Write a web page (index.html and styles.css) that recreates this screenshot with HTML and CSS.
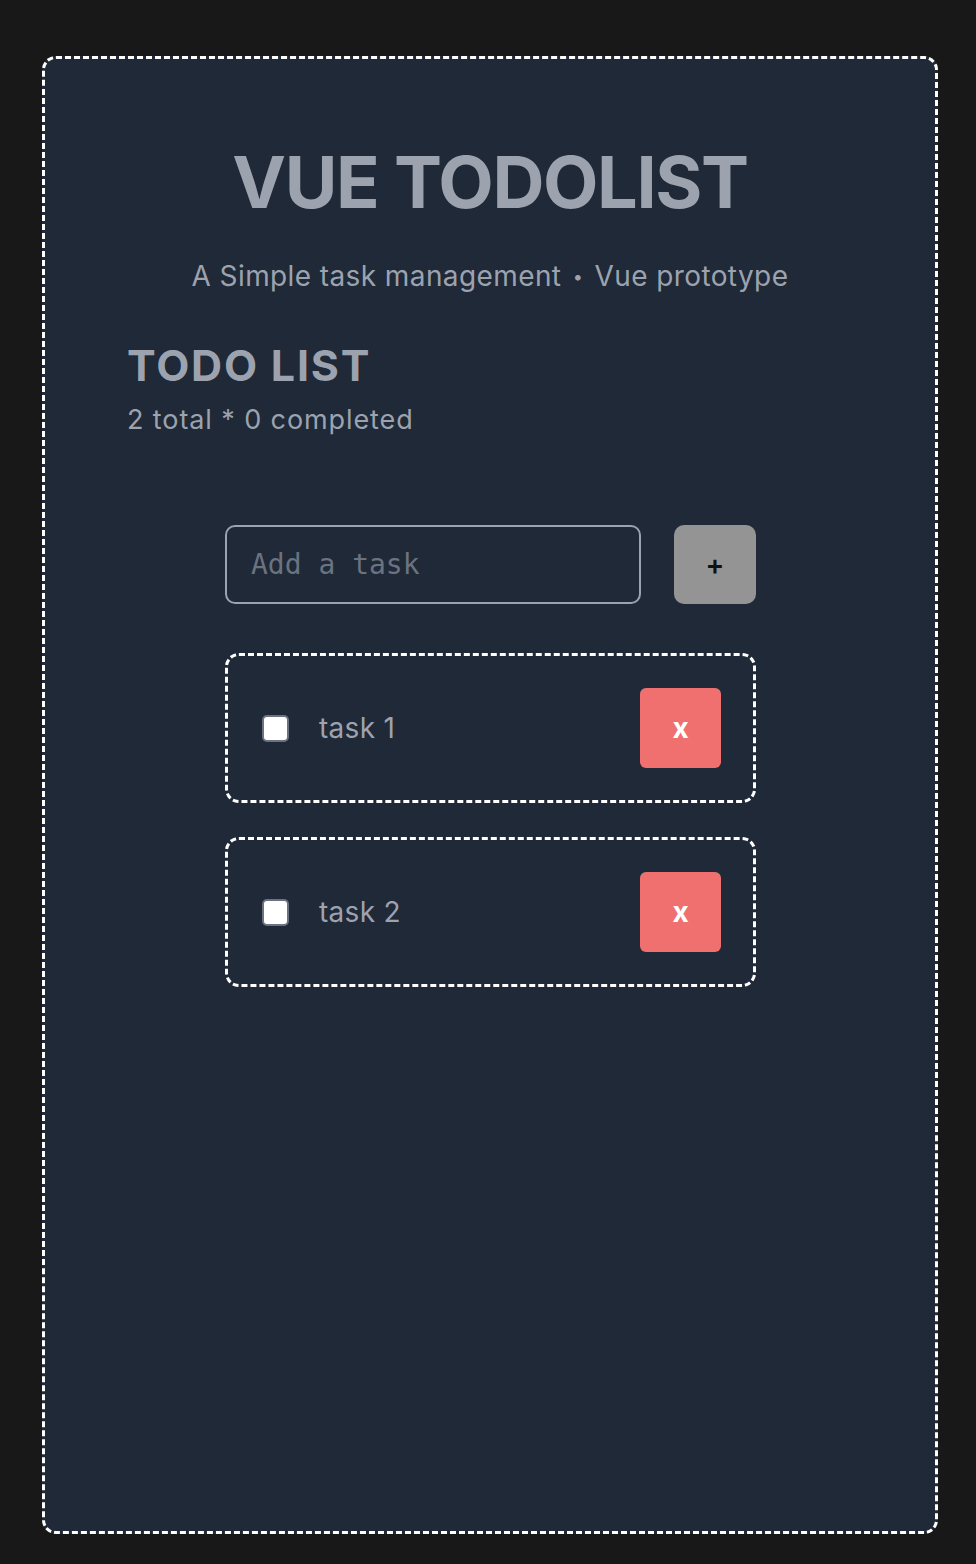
FILE: index.html
```html
<!DOCTYPE html>
<html lang="en">
<head>
<meta charset="utf-8">
<title>Vue Todolist</title>
<link rel="stylesheet" href="styles.css">
</head>
<body>
<main class="card">
  <header class="hero">
    <h1 class="title">VUE TODOLIST</h1>
    <p class="subtitle">A Simple task management <span class="dot">•</span> Vue prototype</p>
  </header>
  <section class="list-head">
    <h2 class="list-title">TODO LIST</h2>
    <p class="stats">2 total * 0 completed</p>
  </section>
  <section class="todo">
    <form class="add-form">
      <input class="add-input" type="text" placeholder="Add a task">
      <button class="add-btn" type="button">+</button>
    </form>
    <ul class="tasks">
      <li class="task">
        <input class="task-check" type="checkbox">
        <span class="task-text">task 1</span>
        <button class="del-btn" type="button">x</button>
      </li>
      <li class="task">
        <input class="task-check" type="checkbox">
        <span class="task-text">task 2</span>
        <button class="del-btn" type="button">x</button>
      </li>
    </ul>
  </section>
</main>
</body>
</html>
```

FILE: styles.css
```css
* { box-sizing: border-box; }

html, body {
  margin: 0;
  padding: 0;
  background: #181818;
}

body {
  padding: 56px 38px 30px 42px;
  font-family: Inter, "Noto Sans", sans-serif;
  color: #9ca3af;
}

.card {
  height: 1478px;
  width: 896px;
  border: 3px dashed #ffffff;
  border-radius: 14px;
  background: #1f2937;
  padding: 79px 0 0 82px;
}

.hero {
  text-align: center;
  padding-right: 82px;
}

.title {
  margin: 0;
  font-size: 72px;
  font-weight: 700;
  line-height: 87px;
  letter-spacing: -1.4px;
  color: #9ca3af;
}

.subtitle {
  margin: 34px 0 0;
  font-size: 28px;
  line-height: 34px;
  height: 34px;
  font-weight: 400;
  letter-spacing: 0.4px;
  color: #9ca3af;
}

.dot {
  font-size: 18px;
  line-height: 1;
  vertical-align: 3px;
  padding: 0 3px;
}

.list-head {
  margin-top: 47px;
}

.list-title {
  margin: 0;
  font-size: 43px;
  line-height: 51px;
  font-weight: 700;
  letter-spacing: 1.8px;
  color: #9ca3af;
}

.stats {
  margin: 14px 0 0;
  font-size: 27px;
  line-height: 30px;
  letter-spacing: 0.9px;
  color: #9ca3af;
}

.todo {
  width: 531px;
  margin: 90px 0 0 98px;
}

.add-form {
  display: flex;
  gap: 33px;
  margin: 0;
}

.add-input {
  flex: 1;
  height: 79px;
  border: 2px solid #9ca3af;
  border-radius: 10px;
  background: transparent;
  padding: 0 24px;
  font-family: "DejaVu Sans Mono", monospace;
  font-size: 28px;
  color: #d1d5db;
  outline: none;
}

.add-input::placeholder {
  color: #6b7280;
}

.add-btn {
  width: 82px;
  height: 79px;
  border: none;
  border-radius: 10px;
  background: #949494;
  color: #111111;
  font-family: Inter, sans-serif;
  font-size: 28px;
  font-weight: 600;
  padding: 0;
}

.tasks {
  list-style: none;
  margin: 49px 0 0;
  padding: 0;
  display: flex;
  flex-direction: column;
  gap: 34px;
}

.task {
  display: flex;
  align-items: center;
  border: 3px dashed #ffffff;
  border-radius: 14px;
  padding: 32px;
  height: 150px;
}

.task-check {
  appearance: none;
  -webkit-appearance: none;
  width: 27px;
  height: 27px;
  margin: 0 0 0 2px;
  background: #ffffff;
  border: 2px solid #6b7280;
  border-radius: 5px;
}

.task-text {
  flex: 1;
  margin-left: 30px;
  font-size: 28px;
  letter-spacing: 0.3px;
  color: #9ca3af;
}

.del-btn {
  width: 81px;
  height: 80px;
  border: none;
  border-radius: 6px;
  background: #f07070;
  color: #ffffff;
  font-family: Inter, sans-serif;
  font-size: 28px;
  font-weight: 700;
  padding: 0;
}
```
